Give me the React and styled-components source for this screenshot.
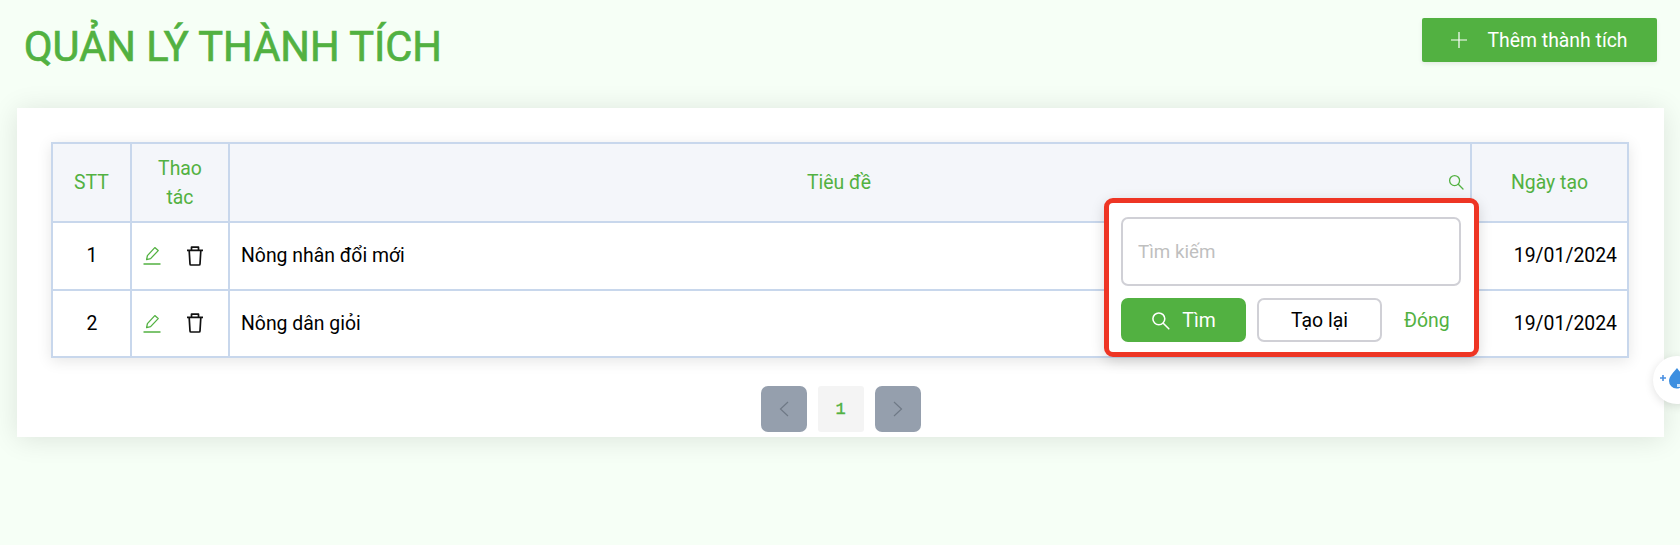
import React from "react";
import styled, { createGlobalStyle } from "styled-components";

const green = "#52b141";
const line = "#c8d7ec";

const Global = createGlobalStyle`
  html, body { margin: 0; padding: 0; background: #f6fff6; overflow: hidden; }
  body { font-family: Roboto, "Noto Sans", sans-serif; color: #000; }
  * { box-sizing: border-box; }
`;

const Page = styled.div`
  position: relative;
  width: 1680px;
  height: 545px;
  padding: 18px 23px 0 17px;
  overflow: hidden;
`;
const TopBar = styled.header`
  display: flex;
  justify-content: space-between;
  align-items: flex-start;
  height: 90px;
`;
const Title = styled.h1`
  margin: 1px 0 0 7px;
  font-size: 41.6px;
  line-height: 55px;
  font-weight: 400;
  color: ${green};
  -webkit-text-stroke: 0.7px ${green};
`;
const AddButton = styled.button`
  display: flex;
  align-items: center;
  justify-content: center;
  gap: 20px;
  width: 235px;
  height: 44px;
  border: 0;
  border-radius: 2px;
  background: ${green};
  color: #fff;
  font: 400 19.4px Roboto, sans-serif;
  box-shadow: 0 2px 4px rgba(0,0,0,.08);
`;
const Card = styled.section`
  width: 1647px;
  height: 329px;
  padding: 34px 34px 0;
  background: #fff;
  box-shadow: 0 2px 26px rgba(0,0,0,.11);
`;
const Table = styled.table`
  width: 1578px;
  table-layout: fixed;
  border-collapse: collapse;
  font-size: 19.4px;
  box-shadow: 0 3px 14px rgba(0,0,0,.1);
`;
const Th = styled.th`
  height: 79px;
  padding: ${p => (p.$withIcon ? "0 34px 0 12px" : "0 16px")};
  border: 2px solid ${line};
  background: #f4f6fa;
  color: ${green};
  font-weight: 400;
  line-height: 29px;
  position: relative;
`;
const Td = styled.td`
  height: 67.5px;
  padding: 0 10px 0 11px;
  border: 2px solid ${line};
  text-align: ${p => p.$align || "left"};
`;
const HeadSearch = styled.span`
  position: absolute;
  right: 6px;
  top: 30px;
  display: flex;
`;
const Actions = styled.div`
  display: flex;
  align-items: center;
  gap: 25px;
`;
const Pager = styled.nav`
  display: flex;
  justify-content: center;
  gap: 11px;
  margin-top: 28px;
`;
const PageArrow = styled.button`
  display: flex;
  align-items: center;
  justify-content: center;
  width: 46px;
  height: 46px;
  padding: 0;
  border: 0;
  border-radius: 7px;
  background: #959fad;
`;
const PageNumber = styled.span`
  display: flex;
  align-items: center;
  justify-content: center;
  width: 46px;
  height: 46px;
  border-radius: 3px;
  background: #f4f4f4;
  color: ${green};
  font: 400 17px "Liberation Mono", monospace;
  -webkit-text-stroke: 0.4px ${green};
`;
const Popup = styled.div`
  position: absolute;
  left: 1104px;
  top: 198px;
  width: 375px;
  height: 159px;
  padding: 14px 12px 0 12px;
  background: #fff;
  border: 5px solid #ee3524;
  border-radius: 9px;
  box-shadow: 0 4px 14px rgba(0,0,0,.15);
`;
const SearchInput = styled.input`
  display: block;
  width: 340px;
  height: 69px;
  padding: 0 15px;
  border: 2px solid #d0d0d6;
  border-radius: 7px;
  font: 400 18.8px Roboto, sans-serif;
  outline: none;
  &::placeholder { color: #bfbfbf; }
`;
const PopupActions = styled.div`
  display: flex;
  align-items: center;
  margin-top: 12px;
`;
const PopupButton = styled.button`
  display: flex;
  align-items: center;
  justify-content: center;
  gap: 12px;
  width: 125px;
  height: 44px;
  margin-right: 11px;
  border: ${p => (p.$primary ? "0" : "2px solid #d0d0d6")};
  border-radius: 7px;
  background: ${p => (p.$primary ? green : "#fff")};
  color: ${p => (p.$primary ? "#fff" : "#000")};
  font: 400 19.4px Roboto, sans-serif;
`;
const CloseLink = styled.a`
  margin-left: 11px;
  color: ${green};
  font-size: 19.4px;
`;
const Widget = styled.div`
  position: absolute;
  left: 1653px;
  top: 356px;
  width: 48px;
  height: 48px;
  border-radius: 50%;
  background: #fff;
  box-shadow: 0 2px 10px rgba(0,0,0,.12);
  display: flex;
  padding: 11px 0 0 5px;
`;

const SearchIcon = ({ size, color }) => (
  <svg width={size} height={size} viewBox="0 0 16 16" fill="none" stroke={color} strokeWidth="1.3">
    <circle cx="6.6" cy="6.6" r="5" />
    <path d="M10.3 10.3 15 15" strokeLinecap="round" />
  </svg>
);
const PlusIcon = () => (
  <svg width="16" height="16" viewBox="0 0 16 16" stroke="#fff" strokeWidth="1.2">
    <path d="M8 0v16M0 8h16" />
  </svg>
);
const EditIcon = () => (
  <svg width="18" height="19" viewBox="0 0 18 19" fill="none" stroke={green} strokeWidth="1.3" strokeLinejoin="round">
    <path d="M3.6 13.6 4.4 9.6 11.8 1.6 15.2 4.6 7.6 12.6z" />
    <path d="M0.5 18h17" strokeWidth="1.5" />
  </svg>
);
const TrashIcon = () => (
  <svg width="18" height="20" viewBox="0 0 18 20" fill="none" stroke="#111" strokeWidth="1.7" strokeLinejoin="round">
    <path d="M1 4.4h16M5.5 4.2V1.2h7v3" />
    <path d="M3.2 4.6 4 18a1 1 0 0 0 1 1h8a1 1 0 0 0 1-1l.8-13.4" />
  </svg>
);
const Chevron = ({ left }) => (
  <svg width="10" height="16" viewBox="0 0 10 16" fill="none" stroke="#6f7986" strokeWidth="1.2">
    <path d={left ? "M9 1 1.5 8 9 15" : "M1 1 8.5 8 1 15"} />
  </svg>
);
const DropIcon = () => (
  <svg width="30" height="24" viewBox="0 0 30 24">
    <path d="M2 11h6M5 8v6" stroke="#4a90e2" strokeWidth="1.6" />
    <path d="M19 1c3 4 7 8 7 13a7.5 7.5 0 0 1-15 0c0-5 5-9 8-13z" fill="#3d8fe0" />
    <path d="M19 17h4v3h-4z" fill="#cfe4f8" />
  </svg>
);

const rows = [
  { id: 1, title: "Nông nhân đổi mới", date: "19/01/2024" },
  { id: 2, title: "Nông dân giỏi", date: "19/01/2024" },
];

export default function App() {
  return (
    <Page>
      <Global />
      <TopBar>
        <Title>QUẢN LÝ THÀNH TÍCH</Title>
        <AddButton><PlusIcon />Thêm thành tích</AddButton>
      </TopBar>
      <Card>
        <Table>
          <colgroup>
            <col style={{ width: 79 }} />
            <col style={{ width: 98 }} />
            <col />
            <col style={{ width: 157 }} />
          </colgroup>
          <thead>
            <tr>
              <Th>STT</Th>
              <Th>Thao tác</Th>
              <Th $withIcon>Tiêu đề<HeadSearch><SearchIcon size={16} color={green} /></HeadSearch></Th>
              <Th>Ngày tạo</Th>
            </tr>
          </thead>
          <tbody>
            {rows.map(r => (
              <tr key={r.id}>
                <Td $align="center">{r.id}</Td>
                <Td><Actions><EditIcon /><TrashIcon /></Actions></Td>
                <Td>{r.title}</Td>
                <Td $align="right">{r.date}</Td>
              </tr>
            ))}
          </tbody>
        </Table>
        <Pager>
          <PageArrow><Chevron left /></PageArrow>
          <PageNumber>1</PageNumber>
          <PageArrow><Chevron /></PageArrow>
        </Pager>
      </Card>
      <Popup>
        <SearchInput placeholder="Tìm kiếm" />
        <PopupActions>
          <PopupButton $primary><SearchIcon size={19} color="#fff" />Tìm</PopupButton>
          <PopupButton>Tạo lại</PopupButton>
          <CloseLink>Đóng</CloseLink>
        </PopupActions>
      </Popup>
      <Widget><DropIcon /></Widget>
    </Page>
  );
}
